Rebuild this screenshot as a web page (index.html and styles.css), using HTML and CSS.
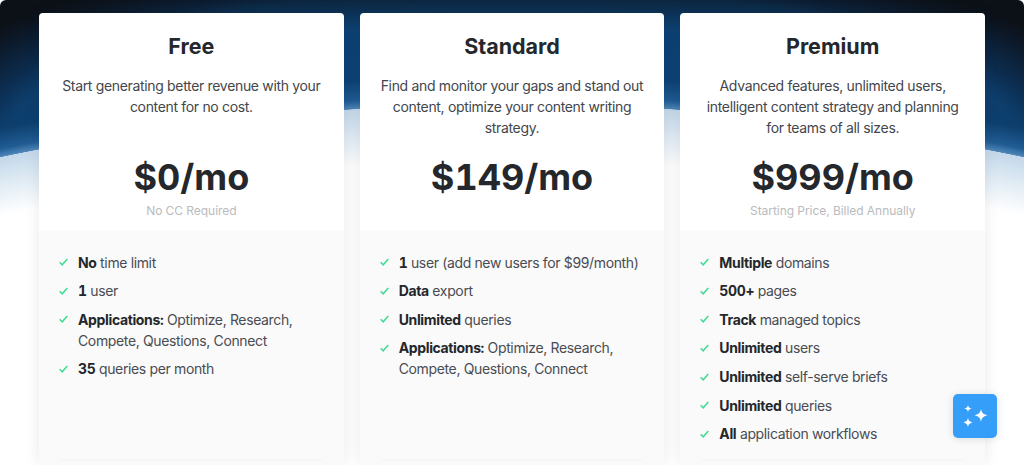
FILE: index.html
```html
<!DOCTYPE html>
<html lang="en">
<head>
<meta charset="utf-8">
<title>Pricing</title>
<link rel="stylesheet" href="styles.css">
</head>
<body>
<svg class="defs" width="0" height="0" aria-hidden="true"><symbol id="check" viewBox="0 0 9 8"><path d="M.7 4.300 3.200 6.800 8.300 1" fill="none" stroke="currentColor" stroke-width="1.500"/></symbol></svg>
<main class="page">
  <section class="card">
    <header class="head">
      <h2 class="title">Free</h2>
      <p class="desc">Start generating better revenue with your content for no cost.</p>
      <div class="price">$0/mo</div>
      <div class="note">No CC Required</div>
    </header>
    <div class="body">
      <ul class="list">
        <li class="item"><svg class="check"><use href="#check"/></svg><span><b>No</b> time limit</span></li>
        <li class="item"><svg class="check"><use href="#check"/></svg><span><b>1</b> user</span></li>
        <li class="item"><svg class="check"><use href="#check"/></svg><span><b>Applications:</b> Optimize, Research, Compete, Questions, Connect</span></li>
        <li class="item"><svg class="check"><use href="#check"/></svg><span><b>35</b> queries per month</span></li>
      </ul>
      <div class="cta"></div>
    </div>
  </section>
  <section class="card">
    <header class="head">
      <h2 class="title">Standard</h2>
      <p class="desc">Find and monitor your gaps and stand out content, optimize your content writing strategy.</p>
      <div class="price">$149/mo</div>
      <div class="note">&nbsp;</div>
    </header>
    <div class="body">
      <ul class="list">
        <li class="item"><svg class="check"><use href="#check"/></svg><span><b>1</b> user (add new users for $99/month)</span></li>
        <li class="item"><svg class="check"><use href="#check"/></svg><span><b>Data</b> export</span></li>
        <li class="item"><svg class="check"><use href="#check"/></svg><span><b>Unlimited</b> queries</span></li>
        <li class="item"><svg class="check"><use href="#check"/></svg><span><b>Applications:</b> Optimize, Research, Compete, Questions, Connect</span></li>
      </ul>
      <div class="cta"></div>
    </div>
  </section>
  <section class="card">
    <header class="head">
      <h2 class="title">Premium</h2>
      <p class="desc">Advanced features, unlimited users, intelligent content strategy and planning for teams of all sizes.</p>
      <div class="price">$999/mo</div>
      <div class="note">Starting Price, Billed Annually</div>
    </header>
    <div class="body">
      <ul class="list">
        <li class="item"><svg class="check"><use href="#check"/></svg><span><b>Multiple</b> domains</span></li>
        <li class="item"><svg class="check"><use href="#check"/></svg><span><b>500+</b> pages</span></li>
        <li class="item"><svg class="check"><use href="#check"/></svg><span><b>Track</b> managed topics</span></li>
        <li class="item"><svg class="check"><use href="#check"/></svg><span><b>Unlimited</b> users</span></li>
        <li class="item"><svg class="check"><use href="#check"/></svg><span><b>Unlimited</b> self-serve briefs</span></li>
        <li class="item"><svg class="check"><use href="#check"/></svg><span><b>Unlimited</b> queries</span></li>
        <li class="item"><svg class="check"><use href="#check"/></svg><span><b>All</b> application workflows</span></li>
      </ul>
      <div class="cta"></div>
    </div>
  </section>
  <button class="fab" type="button" aria-label="Assistant">
    <svg width="26" height="24" viewBox="0 0 26 24"><path fill="#fff" d="M19 4.600c.5 4 1.800 5.600 6.500 6.700-4.700 1.300-6 2.900-6.500 6.900-.5-4-1.800-5.600-6.500-6.900 4.700-1.100 6-2.700 6.500-6.700zM6 .7c.3 2.500 1 3.200 3.800 3.800-2.800.6-3.500 1.300-3.800 3.800-.3-2.500-1-3.200-3.800-3.800C5 3.900 5.700 3.200 6 .7zM6 13.500c.4 3 1.200 3.800 4.700 4.900-3.500 1-4.300 1.900-4.700 4.900-.4-3-1.200-3.900-4.700-4.900 3.500-1.100 4.300-1.900 4.700-4.900z"/></svg>
  </button>
</main>
</body>
</html>
```
FILE: styles.css
```css
* { box-sizing: border-box; }
html, body { margin: 0; height: 100%; background: #fff; overflow: hidden; }
.defs { display: block; height: 0; }
.page {
  position: relative;
  width: 1024px;
  height: 465px;
  overflow: hidden;
  display: flex;
  gap: 16px;
  padding: 13px 39px 0;
  border-radius: 6px;
  font-family: Inter, "Liberation Sans", sans-serif;
  color: #2b2e33;
  background:
    radial-gradient(circle 2500px at 512px 2604px,
      #fff 2400px, #fff 2442px, #e3edf5 2470px, #c3d8ea 2499.5px,
      #4f86b8 2500px, rgba(34,95,151,.9) 2508px, rgba(13,68,120,0) 2528px),
    linear-gradient(180deg, rgba(12,17,24,.55) 0, rgba(12,17,24,.3) 13px, rgba(12,17,24,0) 30px),
    radial-gradient(ellipse 646px 220px at 512px 160px,
      #0d4478 0, #0d4274 70%, #0d3e6c 80%, #0c2c4e 85.500%, #0c1a2b 94%, #0c1118 100%);
}
.card {
  flex: 1 1 0;
  min-width: 0;
  display: flex;
  flex-direction: column;
  background: #fff;
  border-radius: 4px 4px 0 0;
  box-shadow: 0 0 16px rgba(0,0,0,.09);
}
.head { height: 217px; padding: 19px 20px 0; text-align: center; flex: none; }
.title { margin: 0; font-size: 21.5px; line-height: 28px; font-weight: 700; color: #24272b; }
.desc { margin: 14.5px 0 0; height: 63px; font-size: 14px; line-height: 21px; letter-spacing: -.33px; color: #43464b; }
.price { margin-top: 17px; font-size: 36px; line-height: 44px; font-weight: 700; font-variant-numeric: tabular-nums; color: #24272b; }
.note { margin-top: 3px; font-size: 12px; line-height: 18px; letter-spacing: -.05px; color: #b9bbbd; }
.body { flex: 1; display: flex; flex-direction: column; padding: 21.5px 20px 0; background: #fafafa; }
.list { margin: 0; padding: 0; list-style: none; }
.item { display: flex; gap: 10px; margin-bottom: 7.67px; font-size: 14px; line-height: 21px; letter-spacing: -.36px; color: #494c52; }
.item b { font-weight: 700; font-variant-numeric: tabular-nums; color: #24272b; }
.check { flex: none; width: 9px; height: 8px; margin-top: 6.5px; color: #3fdc92; }
.cta { margin-top: auto; height: 4px; box-shadow: 0 0 4px rgba(0,0,0,.05); background: #fafafa; }
.fab {
  position: absolute;
  right: 27px;
  bottom: 27px;
  width: 44px;
  height: 44px;
  padding: 0;
  border: 0;
  border-radius: 5px;
  display: flex;
  align-items: center;
  justify-content: center;
  background: #359ef8;
  box-shadow: 0 1px 8px rgba(0,0,0,.12);
}
```
